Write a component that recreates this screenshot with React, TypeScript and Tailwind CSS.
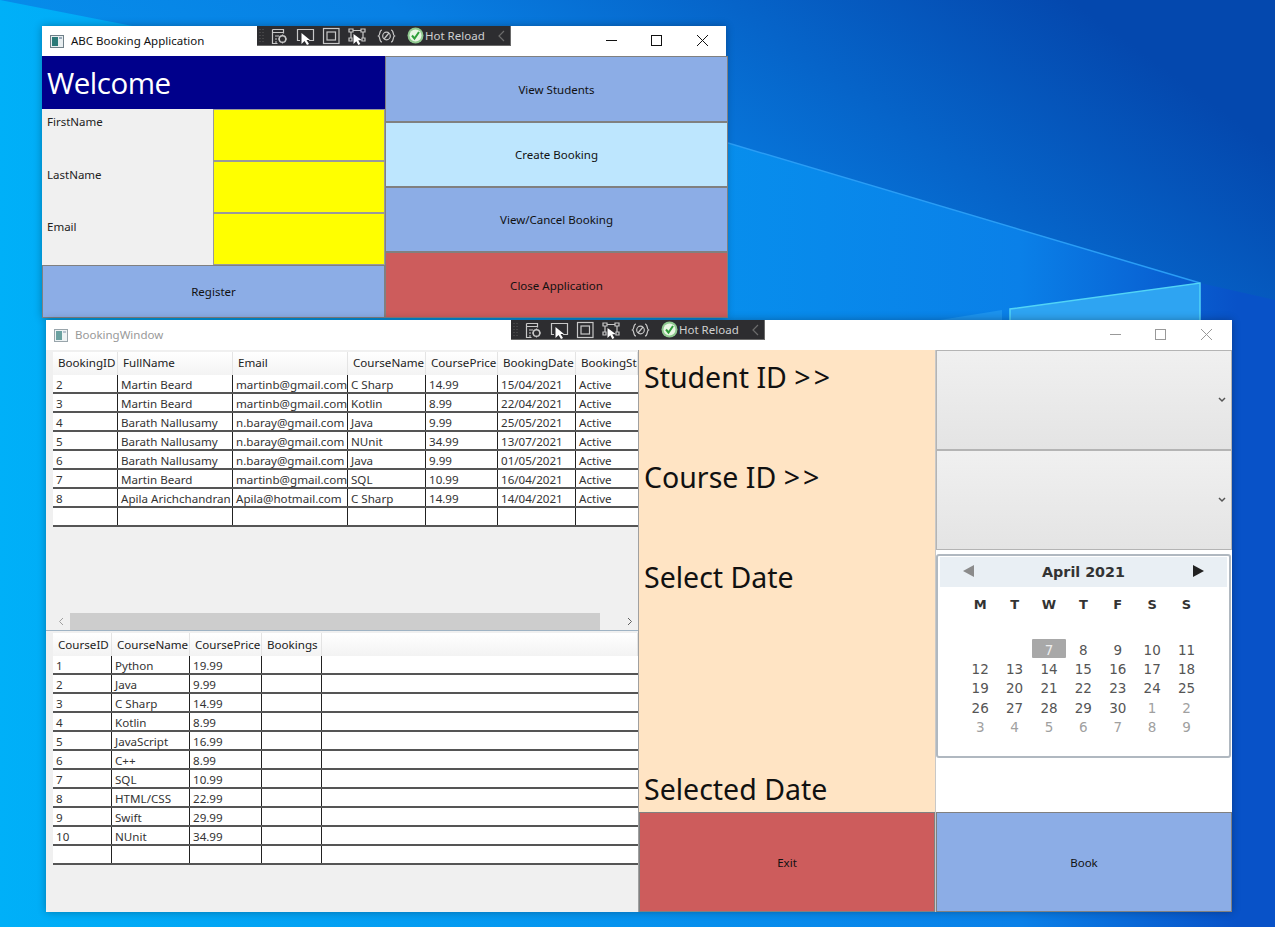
const ui = "font-['Noto_Sans','Open_Sans',sans-serif]";

const bookings = [
  ["2", "Martin Beard", "martinb@gmail.com", "C Sharp", "14.99", "15/04/2021", "Active"],
  ["3", "Martin Beard", "martinb@gmail.com", "Kotlin", "8.99", "22/04/2021", "Active"],
  ["4", "Barath Nallusamy", "n.baray@gmail.com", "Java", "9.99", "25/05/2021", "Active"],
  ["5", "Barath Nallusamy", "n.baray@gmail.com", "NUnit", "34.99", "13/07/2021", "Active"],
  ["6", "Barath Nallusamy", "n.baray@gmail.com", "Java", "9.99", "01/05/2021", "Active"],
  ["7", "Martin Beard", "martinb@gmail.com", "SQL", "10.99", "16/04/2021", "Active"],
  ["8", "Apila Arichchandran", "Apila@hotmail.com", "C Sharp", "14.99", "14/04/2021", "Active"],
  ["", "", "", "", "", "", ""],
];

const courses = [
  ["1", "Python", "19.99", "", ""],
  ["2", "Java", "9.99", "", ""],
  ["3", "C Sharp", "14.99", "", ""],
  ["4", "Kotlin", "8.99", "", ""],
  ["5", "JavaScript", "16.99", "", ""],
  ["6", "C++", "8.99", "", ""],
  ["7", "SQL", "10.99", "", ""],
  ["8", "HTML/CSS", "22.99", "", ""],
  ["9", "Swift", "29.99", "", ""],
  ["10", "NUnit", "34.99", "", ""],
  ["", "", "", "", ""],
];

function Wallpaper() {
  return (
    <svg className="absolute inset-0" width="1275" height="927" viewBox="0 0 1275 927">
      <defs>
        <linearGradient id="sky" x1="0" y1="1" x2="1" y2="0">
          <stop offset="0" stopColor="#00b4fb" />
          <stop offset="0.65" stopColor="#0880e4" />
          <stop offset="0.92" stopColor="#0448ae" />
        </linearGradient>
        <linearGradient id="floor" x1="0" y1="0" x2="1" y2="0">
          <stop offset="0" stopColor="#00b0f8" />
          <stop offset="0.8" stopColor="#0a80e8" />
          <stop offset="0.97" stopColor="#0852c8" />
        </linearGradient>
      </defs>
      <rect width="1275" height="927" fill="url(#sky)" />
      <polygon points="0,0 728,143 1200,283 1275,300 1275,927 0,927" fill="url(#floor)" />
      <polyline points="728,143 1200,283" fill="none" stroke="#2a9df5" strokeWidth="1.500" />
      <polygon points="1010,309 1200,283 1200,320 1010,320" fill="#2ea4f2" />
      <polygon points="940,320 1002,310 1002,320" fill="#1c93ee" />
      <polyline points="1010,320 1010,309 1200,283 1200,320" fill="none" stroke="#52d4f6" strokeWidth="1.500" />
    </svg>
  );
}

function AppIcon({ dim }: { dim?: boolean }) {
  return (
    <svg width="14" height="13" viewBox="0 0 14 13" className={dim ? "opacity-70" : ""}>
      <rect x="0.5" y="0.5" width="13" height="12" fill="#e8eef0" stroke="#6f8088" />
      <rect x="2" y="2" width="6" height="9" fill="#2c7a78" />
      <rect x="9" y="2" width="3" height="2" fill="#9ab" />
    </svg>
  );
}

function DevToolbar({ className }: { className: string }) {
  return (
    <div className={`absolute top-0 w-[254px] h-[20px] bg-[#2d2d30] border-r border-b border-[#6a6a6a] flex items-center text-[#d0d0d0] ${className}`}>
      <svg width="254" height="20" viewBox="0 0 254 20" className="absolute left-0 top-0" fill="none" stroke="#c8c8c8" strokeWidth="1.200">
        <path d="M3 3v14M6 3v14" stroke="#555" strokeDasharray="1 2" />
        <path d="M15.500 3.500h11v4M15.500 3.500v14h5M15.500 6.500h11M18 10h4M18 13h2M18 16h2" />
        <circle cx="25.500" cy="13" r="3.300" strokeWidth="1.500" />
        <path d="M25.500 8.500v1.500M25.500 16v1.500M21 13h1.500M28.500 13h1.500" />
        <path d="M43 14.500h-2.500v-11h16v11H52" />
        <path d="M44.500 7v11l3-3 2.500 4 2-1-2.500-4H53z" fill="#fff" stroke="none" />
        <rect x="66.500" y="2.500" width="15.500" height="15" />
        <rect x="70" y="6" width="8.500" height="8" />
        <path d="M92 3h4v3h-4zM104 3h4v3h-4zM92 12h3v3h-3zM105 12h3v3h-3zM96 4.500h8M94 6v6M106 6v6" />
        <path d="M96.500 8v10l2.800-2.800 2 3.800 2-1-2-3.800h3.700z" fill="#fff" stroke="none" />
        <path d="M125 4c-3 0-1.500 5-3.500 6 2 1 .500 6 3.500 6M134 4c3 0 1.500 5 3.500 6-2 1-.500 6-3.500 6" />
        <circle cx="129.500" cy="10" r="3.800" />
        <path d="M127 13l5-6" />
        <path d="M247 5l-5 5 5 5" stroke="#6c6c6c" />
      </svg>
      <svg width="17" height="17" viewBox="0 0 17 17" className="ml-[150px] shrink-0">
        <circle cx="8.500" cy="8.500" r="8" fill="#8fc98f" />
        <circle cx="8.500" cy="8.500" r="6" fill="#e9f6e4" />
        <path d="M5 8.500l2.500 3L12 5" fill="none" stroke="#2f9e3a" strokeWidth="2" />
      </svg>
      <span className={`text-[11.500px] ml-[1px] leading-none whitespace-nowrap ${ui}`}>Hot Reload</span>
    </div>
  );
}

function WindowControls({ dim }: { dim?: boolean }) {
  const c = dim ? "#999" : "#111";
  return (
    <svg width="130" height="30" viewBox="0 0 130 30" fill="none" stroke={c} strokeWidth="1" className={dim ? "mr-[2px]" : ""}>
      <path d="M10 14.500h11" />
      <rect x="55.500" y="9.500" width="10" height="10" />
      <path d="M101 9l11 11M112 9l-11 11" />
    </svg>
  );
}

function TitleBar({ title, dim, toolbar }: { title: string; dim?: boolean; toolbar: string }) {
  return (
    <div className="relative h-[30px] bg-white flex items-center justify-between shrink-0">
      <div className="flex items-center gap-[7px] pl-[8px]">
        <AppIcon dim={dim} />
        <span className={`text-[11.500px] ${dim ? "text-[#999]" : "text-[#111]"}`}>{title}</span>
      </div>
      <WindowControls dim={dim} />
      <DevToolbar className={toolbar} />
    </div>
  );
}

function Btn({ label, color, className = "" }: { label: string; color: string; className?: string }) {
  return (
    <button className={`flex items-center justify-center border border-[#808080] text-[11.500px] text-[#111] ${color} ${className}`}>
      {label}
    </button>
  );
}

function DataGrid({ cols, heads, rows, headPad }: { cols: string; heads: string[]; rows: string[][]; headPad: string }) {
  return (
    <div className="text-[11.600px] leading-[17px] text-[#222]">
      <div className={`grid h-[23px] bg-gradient-to-b from-white to-[#f3f3f3] ${cols}`}>
        {heads.map((h, i) => (
          <div key={i} className={`pl-[5px] border-r border-[#e4e4e4] overflow-hidden whitespace-nowrap ${headPad}`}>{h}</div>
        ))}
      </div>
      {rows.map((r, i) => (
        <div key={i} className={`grid h-[19px] bg-white border-b-2 border-[#555] ${cols}`}>
          {r.map((c, j) => (
            <div key={j} className="pl-[3px] pt-[1px] border-r border-[#222] last:border-r-0 overflow-hidden whitespace-nowrap text-[#333]">{c}</div>
          ))}
        </div>
      ))}
    </div>
  );
}

function Combo() {
  return (
    <div className="h-[100px] border border-[#b4b4b4] bg-gradient-to-b from-[#f0f0f0] to-[#e4e4e4] flex items-center justify-end pr-[5px]">
      <svg width="8" height="6" viewBox="0 0 8 6" fill="none" stroke="#555" strokeWidth="1.500">
        <path d="M1 1l3 3 3-3" />
      </svg>
    </div>
  );
}

function Calendar() {
  const days: { d: string; muted?: boolean; sel?: boolean }[] = [
    { d: "" }, { d: "" },
    { d: "7", sel: true },
    ...[8, 9, 10, 11, 12, 13, 14, 15, 16, 17, 18, 19, 20, 21, 22, 23, 24, 25, 26, 27, 28, 29, 30].map((n) => ({ d: String(n) })),
    ...[1, 2, 3, 4, 5, 6, 7, 8, 9].map((n) => ({ d: String(n), muted: true })),
  ];
  return (
    <div className="h-[204px] mt-[4px] mr-[1px] bg-white border-2 border-[#b0b8c0] rounded-[3px] font-['DejaVu_Sans',sans-serif] px-[2px] pt-[1px]">
      <div className="h-[30px] bg-[#e9eff4] flex items-center justify-between px-[23px]">
        <svg width="11" height="12" viewBox="0 0 11 12" className="mb-[3px]"><path d="M11 0v12L0 6z" fill="#8b8b8b" /></svg>
        <span className="text-[14.300px] font-bold text-[#333] pt-[2px]">April 2021</span>
        <svg width="11" height="12" viewBox="0 0 11 12" className="mb-[3px]"><path d="M0 0v12l11-6z" fill="#222" /></svg>
      </div>
      <div className="grid grid-cols-[repeat(7,34.400px)] px-[23px] mt-[8px] text-[13px] font-bold text-[#333] text-center leading-[19px]">
        {["M", "T", "W", "T", "F", "S", "S"].map((d, i) => <div key={i}>{d}</div>)}
      </div>
      <div className="grid grid-cols-[repeat(7,34.400px)] auto-rows-[19.200px] px-[23px] mt-[25px] text-[13.500px] text-center leading-[22px] text-[#555]">
        {days.map((x, i) => (
          <div key={i} className={x.sel ? "bg-[#a8a8a8] text-[#eee] rounded-[1px]" : x.muted ? "text-[#a0a0a0]" : ""}>{x.d}</div>
        ))}
      </div>
    </div>
  );
}

function ScrollBar() {
  return (
    <div className="h-[17px] flex items-center bg-[#f0f0f0]">
      <svg width="17" height="17" viewBox="0 0 17 17" fill="none" stroke="#a0a0a0" className="shrink-0"><path d="M10 5l-3.500 3.500L10 12" /></svg>
      <div className="h-[17px] w-[530px] bg-[#cdcdcd] shrink-0" />
      <div className="flex-1 flex justify-end">
        <svg width="17" height="17" viewBox="0 0 17 17" fill="none" stroke="#606060"><path d="M7 5l3.500 3.500L7 12" /></svg>
      </div>
    </div>
  );
}

function WelcomeWindow() {
  return (
    <div className="absolute left-[42px] top-[26px] w-[684px] h-[292px] flex flex-col shadow-[0_0_8px_rgba(0,0,0,0.3)]">
      <TitleBar title="ABC Booking Application" toolbar="left-[215px]" />
      <div className="grid grid-cols-[343px_343px] h-[262px] w-[686px]">
        <div className="flex flex-col">
          <div className="h-[53px] bg-[#00008b] text-white text-[29.500px] leading-[54px] pl-[5px] font-['Open_Sans',sans-serif] tracking-[-0.5px]">Welcome</div>
          <div className="grid grid-cols-[171px_172px] auto-rows-[52px] bg-[#f0f0f0] text-[11.500px] text-[#222]">
            {["FirstName", "LastName", "Email"].map((l, i) => (
              <div key={l} className="contents">
                <div className={`pl-[5px] ${i === 0 ? "pt-[4px]" : "pt-[5px]"}`}>{l}</div>
                <div className="bg-[#ffff00] border border-[#9a9a9a]" />
              </div>
            ))}
          </div>
          <Btn label="Register" color="bg-[#8cade6]" className="h-[53px] pt-[1px]" />
        </div>
        <div className="grid grid-rows-[66px_65px_65px_66px]">
          <Btn label="View Students" color="bg-[#8cade6]" className="pt-[1px]" />
          <Btn label="Create Booking" color="bg-[#bde6fe]" className="pt-[1px]" />
          <Btn label="View/Cancel Booking" color="bg-[#8cade6]" className="pt-[1px]" />
          <Btn label="Close Application" color="bg-[#cd5c5c]" className="pt-[2px]" />
        </div>
      </div>
    </div>
  );
}

function BookingWindow() {
  const label = "text-[28.500px] leading-[41px] text-[#111] pl-[5px] font-['Noto_Sans','Open_Sans',sans-serif]";
  return (
    <div className="absolute left-[46px] top-[320px] w-[1186px] h-[592px] flex flex-col shadow-[0_0_8px_rgba(0,0,0,0.3)]">
      <TitleBar title="BookingWindow" dim toolbar="left-[465px]" />
      <div className="grid grid-cols-[593px_297px_296px] h-[562px]">
        <div className="bg-[#f0f0f0] flex flex-col border-r border-[#a0a0a0]">
          <div className="h-[281px] pl-[7px] pt-[2px] flex flex-col justify-between border-b border-[#9fb3c4]">
            <DataGrid
              cols="grid-cols-[65px_115px_115px_78px_72px_78px_62px]"
              heads={["BookingID", "FullName", "Email", "CourseName", "CoursePrice", "BookingDate", "BookingStatus"]}
              rows={bookings}
              headPad="pt-[2px]"
            />
            <ScrollBar />
          </div>
          <div className="pl-[7px] pt-[2px]">
            <DataGrid
              cols="grid-cols-[59px_78px_72px_60px_316px]"
              heads={["CourseID", "CourseName", "CoursePrice", "Bookings", ""]}
              rows={courses}
              headPad="pt-[3px]"
            />
          </div>
        </div>
        <div className="bg-[#ffe4c4] flex flex-col border-r border-[#c8c8c8]">
          <div className="h-[100px] pt-[7px]"><div className={label}>Student ID <span className="tracking-[3px]">{">>"}</span></div></div>
          <div className="h-[100px] pt-[7px]"><div className={label}>Course ID <span className="tracking-[3px]">{">>"}</span></div></div>
          <div className="h-[212px] pt-[7px]"><div className={label}>Select Date</div></div>
          <div className="h-[50px] pt-[7px]"><div className={label}>Selected Date</div></div>
          <Btn label="Exit" color="bg-[#cd5c5c]" className="h-[100px] pt-[2px]" />
        </div>
        <div className="bg-white flex flex-col">
          <Combo />
          <Combo />
          <Calendar />
          <div className="flex-1" />
          <Btn label="Book" color="bg-[#8cade6]" className="h-[100px] pt-[2px]" />
        </div>
      </div>
    </div>
  );
}

export default function App() {
  return (
    <div className={`relative w-[1275px] h-[927px] overflow-hidden ${ui}`}>
      <Wallpaper />
      <WelcomeWindow />
      <BookingWindow />
    </div>
  );
}
